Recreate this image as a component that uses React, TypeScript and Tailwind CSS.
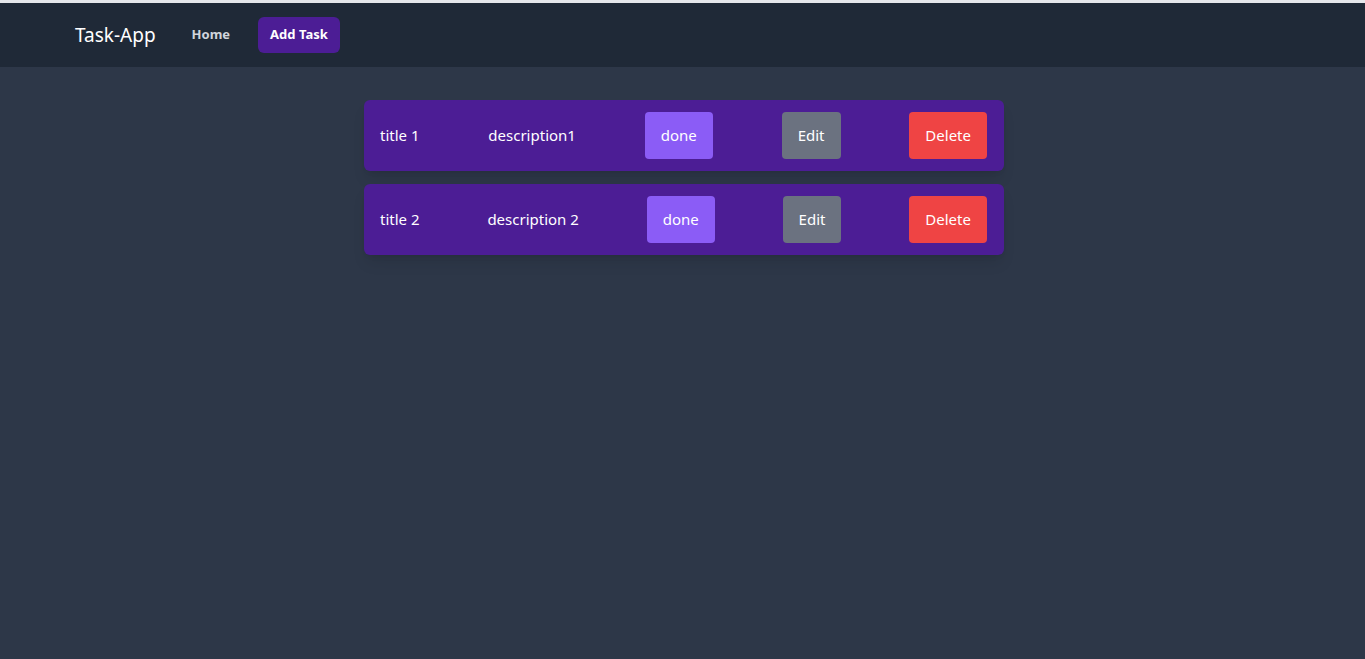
import { useState } from "react";

type Task = { id: number; title: string; description: string };

const initialTasks: Task[] = [
  { id: 1, title: "title 1", description: "description1" },
  { id: 2, title: "title 2", description: "description 2" },
];

const Navbar = () => {
  return (
    <nav className="bg-[#1f2937] h-16 flex items-center pl-[75px]">
      <span className="text-[19px] text-white mr-6">Task-App</span>
      <a className="px-3 h-9 flex items-center text-[13px] font-bold text-gray-300 rounded-md">
        Home
      </a>
      <a className="ml-4 px-3 h-9 flex items-center text-[13px] font-bold text-white bg-[#4c1d95] rounded-md">
        Add Task
      </a>
    </nav>
  );
};

const TaskCard = ({ task, onDelete }: { task: Task; onDelete: () => void }) => {
  return (
    <div className="flex items-center justify-between bg-[#4c1d95] rounded-md shadow-lg pl-4 pr-[17px] py-3 text-white text-[15px]">
      <span>{task.title}</span>
      <span>{task.description}</span>
      <button className="bg-[#8b5cf6] px-4 h-[47px] rounded">done</button>
      <button className="bg-[#6b7280] px-4 h-[47px] rounded">Edit</button>
      <button className="bg-[#ef4444] px-4 h-[47px] rounded" onClick={onDelete}>
        Delete
      </button>
    </div>
  );
};

export default function App() {
  const [tasks, setTasks] = useState(initialTasks);
  return (
    <div
      className="min-h-screen bg-[#2d3748] border-t-[3px] border-[#e5e7eb]"
      style={{ fontFamily: '"Noto Sans", "Open Sans", sans-serif' }}
    >
      <Navbar />
      <div className="w-[640px] mt-[33px] ml-[364px] flex flex-col gap-[13px]">
        {tasks.map((t) => (
          <TaskCard
            key={t.id}
            task={t}
            onDelete={() => setTasks(tasks.filter((x) => x.id !== t.id))}
          />
        ))}
      </div>
    </div>
  );
}
